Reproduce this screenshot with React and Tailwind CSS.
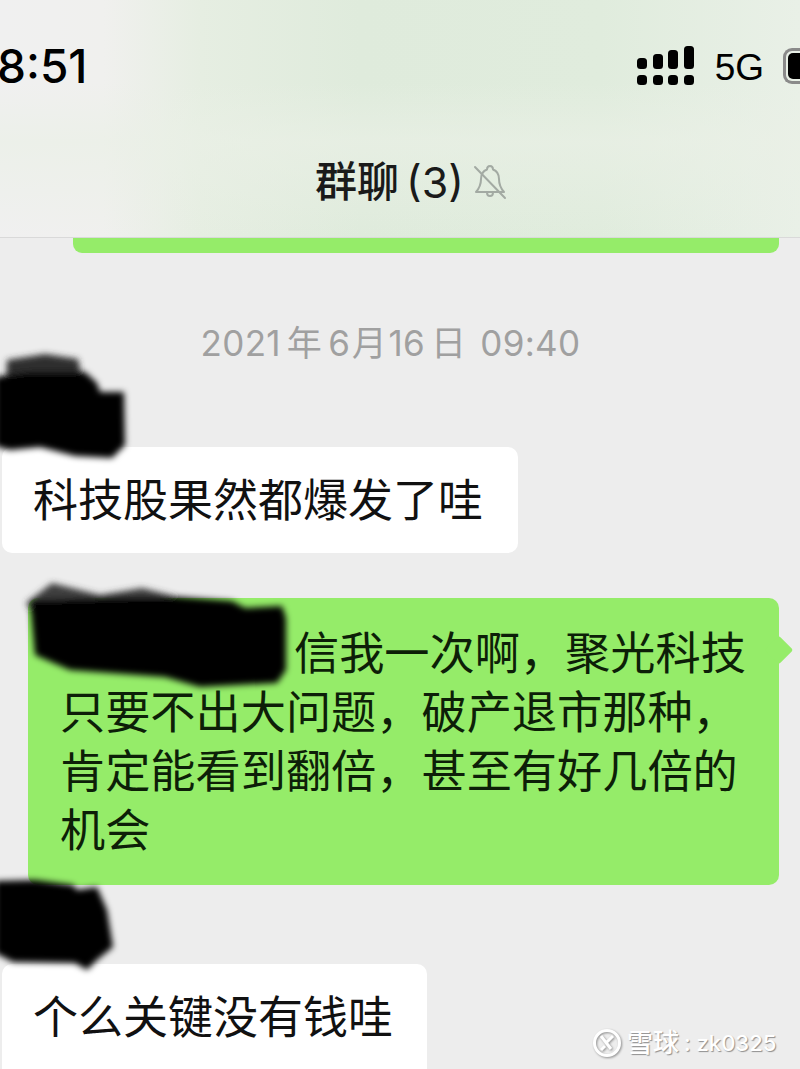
const cjk = "font-['Inter','Noto_Sans_CJK_SC',sans-serif]";

function SignalIcon() {
  return (
    <svg width="58" height="40" viewBox="0 0 58 40" fill="#000">
      <rect x="0" y="12" width="10" height="11" rx="3.5" />
      <rect x="16" y="8" width="10" height="15" rx="3.5" />
      <rect x="31" y="4" width="10" height="19" rx="3.5" />
      <rect x="47" y="0" width="10" height="23" rx="3.5" />
      <rect x="0" y="29" width="10" height="10" rx="3.5" />
      <rect x="16" y="29" width="10" height="10" rx="3.5" />
      <rect x="31" y="29" width="10" height="10" rx="3.5" />
      <rect x="47" y="29" width="10" height="10" rx="3.5" />
    </svg>
  );
}

function MutedBell() {
  return (
    <svg width="34" height="36" viewBox="0 0 34 36" fill="none" stroke="#a3aaa3" strokeWidth="2" strokeLinecap="round" strokeLinejoin="round">
      <path d="M14 5.5c0-2 1.2-3.5 3-3.5s3 1.500 3 3.500c4 1.500 6 5 6 9.500 0 6 1.500 9 5 13H3c3.500-4 5-7 5-13 0-4.500 2-8 6-9.500z" />
      <path d="M14 28.500c0 2 1.300 3.500 3 3.500s3-1.500 3-3.500" />
      <path d="M2 3l30 31" />
    </svg>
  );
}

function Scribbles() {
  return (
    <svg className="absolute inset-0 pointer-events-none" width="800" height="1069" viewBox="0 0 800 1069">
      <defs>
        <filter id="soft" x="-10%" y="-10%" width="120%" height="120%">
          <feGaussianBlur stdDeviation="3" />
        </filter>
      </defs>
      <g filter="url(#soft)">
        <path fill="#2e2e2e" d="M7 360 L45 354 L78 359 L82 378 L40 385 L6 385 Z" />
        <path fill="#050505" d="M-5 377 L30 372 L85 372 L97 383 L100 392 L124 392 L125 445 L112 458 L75 456 L40 447 L10 450 L-5 446 Z" />
        <path fill="#3c3c3c" d="M26 603 L52 583 L100 595 L142 588 L190 600 L150 615 L40 625 Z" />
        <path fill="#050505" d="M30 600 L130 597 L180 597 L232 601 L245 608 L282 606 L286 618 L286 670 L277 683 L200 687 L165 677 L70 670 L35 655 Z" />
        <path fill="#050505" d="M-5 881 L35 880 L73 885 L77 890 L97 887 L107 910 L113 947 L97 960 L87 970 L75 963 L13 962 L-5 953 Z" />
      </g>
    </svg>
  );
}

export default function App() {
  return (
    <div className={`relative w-[800px] h-[1069px] overflow-hidden bg-[#ededed] text-black ${cjk}`}>
      {/* header */}
      <header className="h-[238px] border-b border-[#d9d9d9] bg-[linear-gradient(180deg,transparent_35%,#eaf0e6aa_60%,transparent_100%),linear-gradient(90deg,#f0f0f0_0%,#f0f0ee_13%,#e6eee2_25%,#dfebdc_45%,#e0ecdd_75%,#e9f0e7_100%)]">
        <div className="flex items-start h-[160px] pt-[46px]">
          <div className="-ml-[3px] mt-[-2px] text-[46px] leading-[44px] font-medium">8:51</div>
          <div className="ml-auto -mr-[13px] flex items-start">
            <SignalIcon />
            <div className="ml-[20px] mt-[2px] text-[37px] leading-[40px] font-['Liberation_Sans',sans-serif]">5G</div>
            <div className="ml-[19px] mt-[2px] w-[30px] h-[36px] rounded-l-[9px] border-[3px] border-r-0 border-[#8a8a8a] p-[2px] pr-0">
              <div className="w-full h-full rounded-l-[5px] bg-black" />
            </div>
          </div>
        </div>
        <div className="flex items-center h-[44px] pl-[315px] text-[#1a1a1a]">
          <span className="text-[42px] leading-[44px] font-medium">群聊</span>
          <span className="ml-[7px] text-[43px] leading-[44px]">(3)</span>
          <span className="ml-[9px]"><MutedBell /></span>
        </div>
      </header>

      {/* last bubble of the previous message */}
      <div className="ml-[73px] w-[706px] h-[15px] rounded-b-[9px] bg-[#95ec69]" />

      <div className="mt-[66px] pr-[19px] text-center text-[35px] leading-[48px] text-[#a0a0a0] tracking-[0.3px]">
        2021<span className="mx-[6px]">年</span>6<span className="mx-[1.5px]">月</span>16<span className="ml-[6px] mr-[14px]">日</span>09:40
      </div>

      <div className="mt-[80px] ml-[2px] w-[516px] h-[106px] flex items-center pl-[31px] rounded-[10px] bg-white text-[45px] leading-[59px] text-[#111]">
        科技股果然都爆发了哇
      </div>

      <div className="relative mt-[45px] ml-[28px] w-[751px] h-[287px] rounded-[10px] bg-[#95ec69] pl-[32px] pt-[26px] text-[45.2px] leading-[59px] text-[#0d1f08]">
        <div className="whitespace-nowrap"><span className="inline-block w-[234px]" />信我一次啊，聚光科技</div>
        <div className="whitespace-nowrap">只要不出大问题，破产退市那种，</div>
        <div className="whitespace-nowrap">肯定能看到翻倍，甚至有好几倍的</div>
        <div className="whitespace-nowrap">机会</div>
        <div className="absolute right-[-10px] top-[42px] w-[20px] h-[20px] rotate-45 rounded-[2px] bg-[#95ec69]" />
      </div>

      <div className="mt-[79px] ml-[2px] w-[425px] h-[140px] pt-[24px] pl-[31px] rounded-[10px] bg-white text-[45px] leading-[59px] text-[#111]">
        个么关键没有钱哇
      </div>

      <Scribbles />

      {/* watermark */}
      <div className="absolute left-[592px] top-[1026px] flex items-center text-white [text-shadow:1px_1px_1px_#8f8f8f]">
        <svg width="30" height="30" viewBox="0 0 30 30" fill="none" stroke="#fff" strokeWidth="3" className="drop-shadow-[1px_1px_1px_#8f8f8f]">
          <circle cx="15" cy="15" r="12.500" />
          <path d="M9 8l10 13M21 8l-7 7M9 22l4-4" />
        </svg>
        <span className="ml-[5px] text-[26px] leading-[34px] font-medium">雪球</span>
        <span className="ml-[5px] text-[22px] leading-[34px] font-medium">: zk0325</span>
      </div>
    </div>
  );
}
